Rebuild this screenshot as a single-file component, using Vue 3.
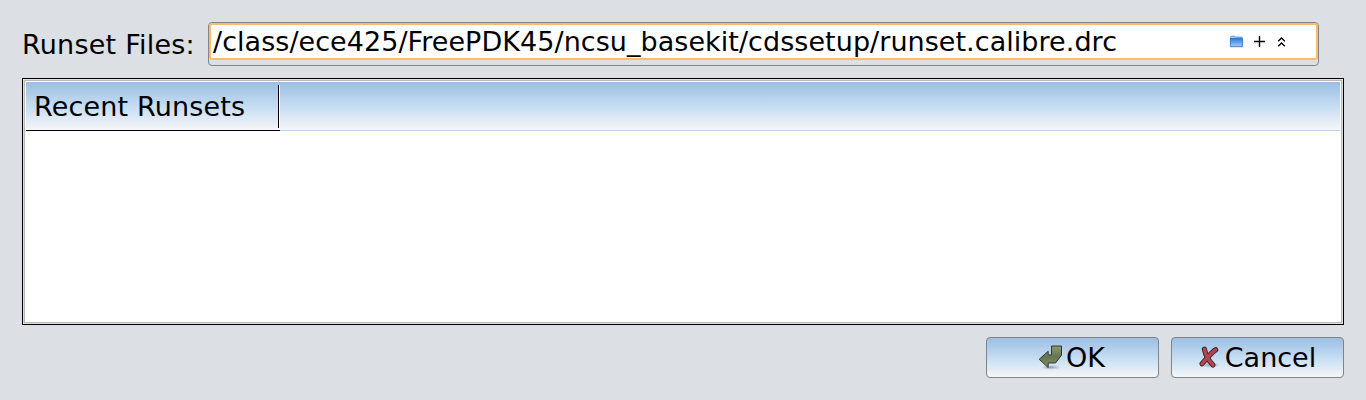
<script setup>
const label = 'Runset Files:'
const path = '/class/ece425/FreePDK45/ncsu_basekit/cdssetup/runset.calibre.drc'
const columns = ['Recent Runsets']
</script>

<template>
  <main class="dialog">
    <div class="file-row">
      <label class="label">{{ label }}</label>
      <div class="field">
        <div class="field-inner">
          <span class="path">{{ path }}</span>
          <svg class="folder" width="15" height="13" viewBox="0 0 15 13">
            <defs>
              <linearGradient id="folderFill" x1="0" y1="0" x2="0" y2="1">
                <stop offset="0" stop-color="#2f7fdc" />
                <stop offset="1" stop-color="#a9c9f2" />
              </linearGradient>
            </defs>
            <path d="M1.5 3.5V1.9L2.2 1.2h3.4l.9.9h6.6v1.4z" fill="#a8cbf3" stroke="#4a8bdc" stroke-width=".9" />
            <path d="M1.4 3.6h12.2v8.1H1.4z" fill="url(#folderFill)" stroke="#2f77d2" stroke-width=".9" />
          </svg>
          <svg class="plus" width="13" height="13" viewBox="0 0 13 13">
            <path d="M6.5 1v11M1 6.5h11" stroke="#000" stroke-width="1.4" />
          </svg>
          <svg class="chevrons" width="9" height="12" viewBox="0 0 9 12">
            <path d="M1.2 5.2 4.5 2l3.3 3.2M1.2 10.2 4.5 7l3.3 3.2" fill="none" stroke="#000" stroke-width="1.3" />
          </svg>
        </div>
      </div>
    </div>

    <section class="list">
      <div class="list-groove">
        <div class="list-body">
          <div class="head">
            <div v-for="c in columns" :key="c" class="col"><span class="col-text">{{ c }}</span></div>
          </div>
        </div>
      </div>
    </section>

    <div class="actions">
      <button class="btn">
        <svg class="ok-icon" width="26" height="26" viewBox="0 0 26 26">
          <defs>
            <linearGradient id="okFill" x1="0" y1="0" x2="0" y2="1">
              <stop offset="0" stop-color="#8a9c70" />
              <stop offset=".5" stop-color="#657650" />
              <stop offset="1" stop-color="#7d9068" />
            </linearGradient>
            <radialGradient id="okShade">
              <stop offset="0" stop-color="#68727c" stop-opacity=".65" />
              <stop offset="1" stop-color="#68727c" stop-opacity="0" />
            </radialGradient>
          </defs>
          <ellipse cx="13" cy="22.3" rx="10" ry="2.4" fill="url(#okShade)" />
          <path d="M13.5 1h10V10.2L17.5 18H10.2V22.6L1.2 14.3 10.2 6.3v3.6h3.3z" fill="url(#okFill)" stroke="#30382b" stroke-width="1" stroke-linejoin="round" />
        </svg>
        <span>OK</span>
      </button>
      <button class="btn">
        <svg class="cancel-icon" width="26" height="26" viewBox="0 0 26 26">
          <defs>
            <radialGradient id="cancelShade">
              <stop offset="0" stop-color="#68727c" stop-opacity=".55" />
              <stop offset="1" stop-color="#68727c" stop-opacity="0" />
            </radialGradient>
          </defs>
          <ellipse cx="13" cy="20" rx="10" ry="3" fill="url(#cancelShade)" />
          <g fill="none" stroke-linecap="round">
            <path d="M7.4 4.2C8.7 10.5 12.5 16.5 16 20M18.7 4.8C14 7.8 9 14.5 5 18.8" stroke="#33262b" stroke-width="5.2" />
            <path d="M7.4 4.2C8.7 10.5 12.5 16.5 16 20M18.7 4.8C14 7.8 9 14.5 5 18.8" stroke="#b3444e" stroke-width="3.4" />
          </g>
        </svg>
        <span>Cancel</span>
      </button>
    </div>
  </main>
</template>

<style>
body {
  margin: 0;
  background: #dcdfe4;
}
</style>

<style scoped>
.dialog {
  box-sizing: border-box;
  height: 400px;
  padding: 22px 22px 0;
  background: #dcdfe4;
  color: #000;
  font: 27px/32px "DejaVu Sans", sans-serif;
  overflow: hidden;
}
.file-row {
  display: flex;
  height: 44px;
}
.label {
  width: 186px;
  padding-top: 7px;
  white-space: nowrap;
  letter-spacing: 0.22px;
}
.field {
  box-sizing: border-box;
  width: 1111px;
  height: 44px;
  border: 1px solid #808387;
  border-radius: 4px;
}
.field-inner {
  box-sizing: border-box;
  display: flex;
  align-items: center;
  height: 37px;
  border: 2px solid #ffbb6c;
  border-radius: 3px;
  background: #fff;
  padding-left: 2px;
}
.path {
  width: 1016px;
  white-space: nowrap;
  letter-spacing: 0.05px;
}
.folder {
  margin-right: 9px;
}
.plus {
  margin-right: 11px;
}
.list {
  box-sizing: border-box;
  height: 247px;
  margin-top: 12px;
  border: 1px solid #000;
  padding: 1px;
}
.list-groove {
  box-sizing: border-box;
  height: 243px;
  border: 1px solid #b9b9b9;
  background: #fff;
  padding: 1px;
}
.head {
  box-sizing: border-box;
  height: 49px;
  border-bottom: 1px solid #bcd3e8;
  background: linear-gradient(#9bbfe3, #c9dff4 55%, #f6f6f8);
}
.col {
  box-sizing: border-box;
  display: flex;
  width: 254px;
  height: 49px;
  padding-top: 3px;
  border-bottom: 1px solid #000;
}
.col-text {
  box-sizing: border-box;
  width: 254px;
  height: 43px;
  padding: 6px 0 0 8px;
  border-right: 1px solid #fff;
  box-shadow: inset -1px 0 #000;
  letter-spacing: 0.15px;
}
.actions {
  display: flex;
  justify-content: flex-end;
  gap: 12px;
  margin-top: 12px;
}
.btn {
  box-sizing: border-box;
  display: flex;
  align-items: center;
  justify-content: center;
  width: 173px;
  height: 41px;
  padding: 0 2px 0 0;
  border: 1px solid #808387;
  border-radius: 4px;
  background: linear-gradient(#9bbfe3, #c9dff4 55%, #f6f6f8);
  color: #000;
  font: inherit;
}
.btn svg {
  flex: none;
  margin-right: 2px;
}
</style>
